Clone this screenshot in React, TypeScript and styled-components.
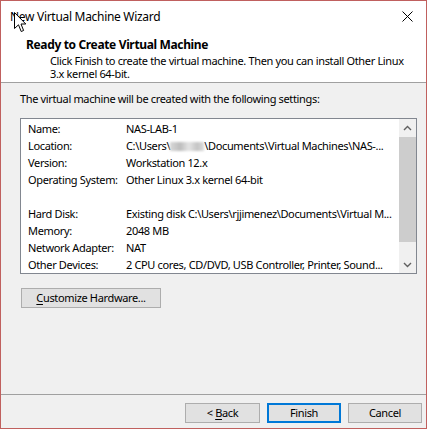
import React from "react";
import styled, { createGlobalStyle } from "styled-components";

const GlobalStyle = createGlobalStyle`
  html, body { margin: 0; padding: 0; background: #ffffff; }
  body {
    font-family: "Noto Sans", "Open Sans", sans-serif;
    font-size: 11px;
    color: #000;
  }
  * { box-sizing: border-box; }
`;

const Window = styled.div`
  position: relative;
  width: 427px;
  height: 429px;
  border: 1px solid #c0605e;
  background: #f0f0f0;
  display: flex;
  flex-direction: column;
  letter-spacing: -0.35px;
`;

const TitleBar = styled.div`
  height: 30px;
  background: #fff;
  display: flex;
  align-items: center;
  justify-content: space-between;
  padding: 0 7px 0 9px;
`;

const TitleText = styled.span`
  font-size: 12px;
  line-height: 16px;
  padding-top: 1px;
  letter-spacing: -0.3px;
`;

const CloseBox = styled.div`
  width: 24px;
  height: 24px;
  display: flex;
  align-items: center;
  justify-content: center;
`;

const Header = styled.div`
  height: 52px;
  background: #fff;
  border-bottom: 1px solid #a0a0a0;
  padding-top: 6px;
`;

const HeaderTitle = styled.div`
  font-weight: 700;
  font-size: 12px;
  line-height: 16px;
  margin-left: 25px;
  letter-spacing: -0.35px;
`;

const HeaderDesc = styled.div`
  margin: 1px 0 0 49px;
  line-height: 13px;
`;

const Body = styled.div`
  flex: 1;
  display: flex;
  flex-direction: column;
  padding: 8px 0 0 19px;
`;

const Intro = styled.div`
  line-height: 16px;
`;

const ListBox = styled.div`
  margin-top: 11px;
  width: 397px;
  height: 156px;
  border: 1px solid #828790;
  background: #fff;
  display: flex;
  overflow: hidden;
`;

const ListContent = styled.div`
  flex: 1;
  padding: 1px 0 0 7px;
  overflow: hidden;
`;

const Row = styled.div`
  height: 17px;
  line-height: 17px;
  display: flex;
  white-space: nowrap;
`;

const Label = styled.span`
  width: 98px;
  flex: none;
`;

const Value = styled.span`
  white-space: nowrap;
`;

const Blur = styled.span`
  display: inline-block;
  width: 34px;
  height: 9px;
  vertical-align: -1px;
  background: linear-gradient(90deg, #d8d8d8 0%, #bdbdbd 30%, #e4e4e4 55%, #c4c4c4 80%, #dcdcdc 100%);
  filter: blur(0.8px);
`;

const ScrollBar = styled.div`
  width: 17px;
  flex: none;
  background: #f0f0f0;
  display: flex;
  flex-direction: column;
`;

const ScrollArrow = styled.div`
  height: 17px;
  display: flex;
  align-items: center;
  justify-content: center;
`;

const Thumb = styled.div`
  margin-top: 1px;
  height: 105px;
  background: #cdcdcd;
`;

const ScrollSpacer = styled.div`
  flex: 1;
`;

const Button = styled.button<{ $default?: boolean; $width: number }>`
  width: ${(p) => p.$width}px;
  height: 20px;
  padding: 0;
  font-family: inherit;
  font-size: 11px;
  letter-spacing: -0.35px;
  color: #000;
  background: #e1e1e1;
  border: ${(p) => (p.$default ? "2px solid #0078d7" : "1px solid #adadad")};
  line-height: 16px;
`;

const CustomizeButton = styled(Button)`
  margin: 14px 0 0 1px;
`;

const Footer = styled.div`
  height: 34px;
  border-top: 1px solid #a0a0a0;
  display: flex;
  justify-content: flex-end;
  align-items: flex-start;
  gap: 7px;
  padding: 8px 4px 0 0;
`;

const U = styled.span`
  text-decoration: underline;
  text-underline-offset: 2px;
`;

const Cursor = styled.svg`
  position: absolute;
  left: 13px;
  top: 11px;
`;

const Chevron = ({ up }: { up?: boolean }) => (
  <svg width="9" height="6" viewBox="0 0 9 6">
    <path
      d={up ? "M1 5 L4.5 1.5 L8 5" : "M1 1 L4.5 4.5 L8 1"}
      fill="none"
      stroke="#606060"
      strokeWidth="1.4"
    />
  </svg>
);

const rows1 = [
  ["Name:", "NAS-LAB-1"],
  ["Location:", "loc"],
  ["Version:", "Workstation 12.x"],
  ["Operating System:", "Other Linux 3.x kernel 64-bit"],
];
const rows2 = [
  ["Hard Disk:", "Existing disk C:\\Users\\rjjimenez\\Documents\\Virtual M..."],
  ["Memory:", "2048 MB"],
  ["Network Adapter:", "NAT"],
  ["Other Devices:", "2 CPU cores, CD/DVD, USB Controller, Printer, Sound..."],
];

export default function App() {
  return (
    <>
      <GlobalStyle />
      <Window>
        <TitleBar>
          <TitleText>New Virtual Machine Wizard</TitleText>
          <CloseBox>
            <svg width="11" height="11" viewBox="0 0 11 11">
              <path d="M0.5 0.5 L10.5 10.5 M10.5 0.5 L0.5 10.5" stroke="#000" strokeWidth="1" />
            </svg>
          </CloseBox>
        </TitleBar>
        <Header>
          <HeaderTitle>Ready to Create Virtual Machine</HeaderTitle>
          <HeaderDesc>
            Click Finish to create the virtual machine. Then you can install Other Linux
            <br />
            3.x kernel 64-bit.
          </HeaderDesc>
        </Header>
        <Body>
          <Intro>The virtual machine will be created with the following settings:</Intro>
          <ListBox>
            <ListContent>
              {rows1.map(([l, v]) => (
                <Row key={l}>
                  <Label>{l}</Label>
                  <Value>
                    {v === "loc" ? (
                      <>
                        C:\Users\<Blur />\Documents\Virtual Machines\NAS-...
                      </>
                    ) : (
                      v
                    )}
                  </Value>
                </Row>
              ))}
              <Row />
              {rows2.map(([l, v]) => (
                <Row key={l}>
                  <Label>{l}</Label>
                  <Value>{v}</Value>
                </Row>
              ))}
            </ListContent>
            <ScrollBar>
              <ScrollArrow>
                <Chevron up />
              </ScrollArrow>
              <Thumb />
              <ScrollSpacer />
              <ScrollArrow>
                <Chevron />
              </ScrollArrow>
            </ScrollBar>
          </ListBox>
          <CustomizeButton $width={140}>
            <U>C</U>ustomize Hardware...
          </CustomizeButton>
        </Body>
        <Footer>
          <Button $width={75}>
            &lt; <U>B</U>ack
          </Button>
          <Button $width={74} $default>
            Finish
          </Button>
          <Button $width={74}>Cancel</Button>
        </Footer>
        <Cursor width="13" height="21" viewBox="0 0 13 21">
          <path
            d="M0.5 0.5 L0.5 16.5 L4.5 12.8 L7.2 19.5 L9.6 18.5 L7 12 L11.8 12 Z"
            fill="#fff"
            stroke="#000"
            strokeWidth="1"
            strokeLinejoin="miter"
          />
        </Cursor>
      </Window>
    </>
  );
}
